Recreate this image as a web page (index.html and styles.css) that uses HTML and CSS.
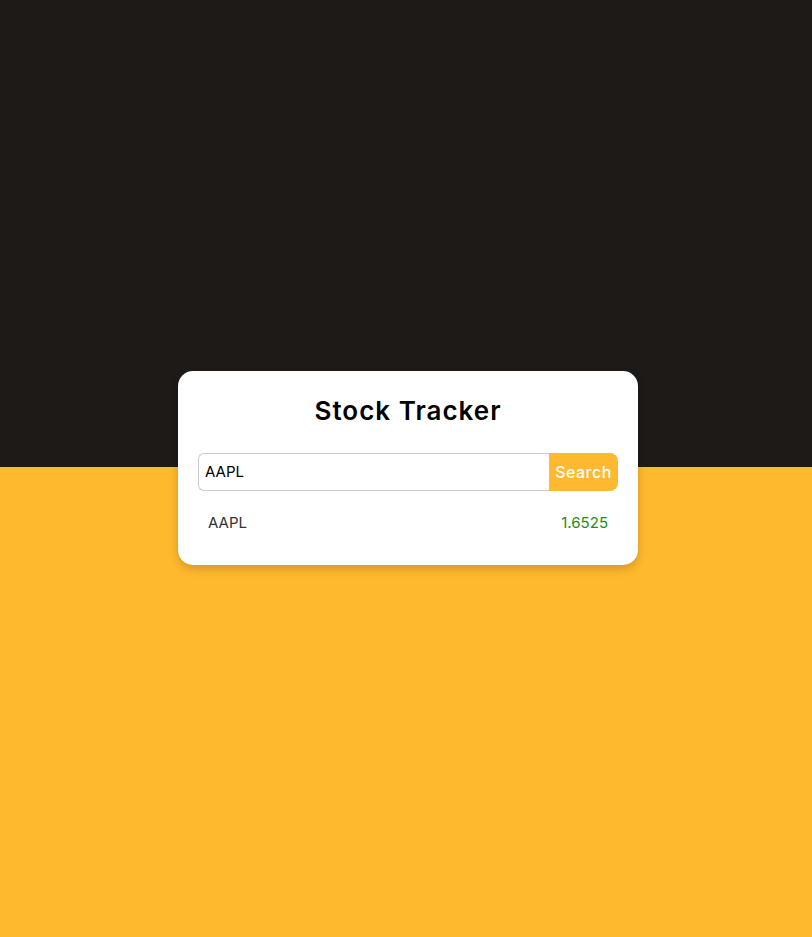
FILE: index.html
```html
<!DOCTYPE html>
<html lang="en">
<head>
<meta charset="utf-8">
<title>Stock Tracker</title>
<link rel="stylesheet" href="styles.css">
</head>
<body>
<main class="page">
  <section class="card">
    <h1 class="title">Stock Tracker</h1>
    <form class="search">
      <input class="search-input" type="text" value="AAPL">
      <button class="search-btn" type="button">Search</button>
    </form>
    <div class="result">
      <span class="symbol">AAPL</span>
      <span class="price">1.6525</span>
    </div>
  </section>
</main>
</body>
</html>
```
FILE: styles.css
```css
* { box-sizing: border-box; }
html, body { margin: 0; padding: 0; }
body {
  font-family: "Inter", "Noto Sans", sans-serif;
}
.page {
  height: 937px;
  display: flex;
  align-items: center;
  justify-content: center;
  padding-left: 4px;
  padding-bottom: 2px;
  background: linear-gradient(to bottom, #1e1a18 0, #1e1a18 467px, #ffb92e 467px, #ffb92e 100%);
}
.card {
  width: 460px;
  background: #fff;
  border-radius: 15px;
  padding: 20px 20px 20px;
  box-shadow: 0 4px 10px rgba(0,0,0,0.18);
}
.title {
  margin: 0 0 22px;
  font-size: 26px;
  line-height: 40px;
  font-weight: 600;
  text-align: center;
  color: #000;
  letter-spacing: 1px;
}
.search {
  display: flex;
  margin: 0;
}
.search-input {
  flex: 1;
  height: 38px;
  border: 1px solid #ccc;
  border-right: none;
  border-radius: 6px 0 0 6px;
  padding: 0 6px;
  font-family: inherit;
  font-size: 15px;
  color: #000;
  outline: none;
}
.search-btn {
  width: 69px;
  height: 38px;
  border: none;
  background: #ffb92e;
  color: #fff;
  border-radius: 0 8px 8px 0;
  font-family: inherit;
  font-size: 16px;
  font-weight: 500;
  letter-spacing: 0.5px;
  padding: 0;
}
.result {
  margin-top: 10px;
  padding: 10px;
  display: flex;
  justify-content: space-between;
  font-size: 15px;
  line-height: 24px;
}
.symbol { color: #333; }
.price { color: #1a8f1a; }
```
